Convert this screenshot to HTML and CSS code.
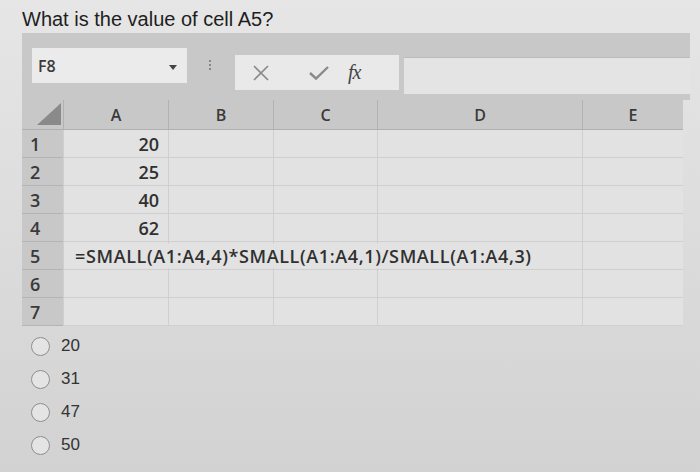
FILE: index.html
```html
<!DOCTYPE html>
<html>
<head>
<meta charset="utf-8">
<link rel="stylesheet" href="styles.css">
</head>
<body>
<div class="page">
  <div class="title">What is the value of cell A5?</div>
  <div class="excel">
    <div class="toolbar">
      <div class="namebox"><span class="name">F8</span><span class="caret"></span></div>
      <div class="dots"><i></i><i></i><i></i></div>
      <div class="actions">
        <svg class="ico-x" width="18" height="18" viewBox="0 0 18 18"><path d="M2 2L16 16M16 2L2 16" stroke="#8a8a8a" stroke-width="1.7" fill="none"/></svg>
        <svg class="ico-check" width="22" height="16" viewBox="0 0 22 16"><path d="M2 8L8 13.5L20 2" stroke="#8a8a8a" stroke-width="2.4" fill="none"/></svg>
        <span class="fx">fx</span>
      </div>
      <div class="formula"></div>
    </div>
    <div class="sheet">
      <div class="corner"><span class="tri"></span></div>
      <div class="ch">A</div><div class="ch">B</div><div class="ch">C</div><div class="ch">D</div><div class="ch">E</div>

      <div class="rh">1</div><div class="c num">20</div><div class="c"></div><div class="c"></div><div class="c"></div><div class="c"></div>
      <div class="rh">2</div><div class="c num">25</div><div class="c"></div><div class="c"></div><div class="c"></div><div class="c"></div>
      <div class="rh">3</div><div class="c num">40</div><div class="c"></div><div class="c"></div><div class="c"></div><div class="c"></div>
      <div class="rh">4</div><div class="c num">62</div><div class="c"></div><div class="c"></div><div class="c"></div><div class="c"></div>
      <div class="rh">5</div><div class="c over"><span class="ftext">=SMALL(A1:A4,4)*SMALL(A1:A4,1)/SMALL(A1:A4,3)</span></div><div class="c"></div><div class="c"></div><div class="c"></div><div class="c"></div>
      <div class="rh">6</div><div class="c"></div><div class="c"></div><div class="c"></div><div class="c"></div><div class="c"></div>
      <div class="rh">7</div><div class="c"></div><div class="c"></div><div class="c"></div><div class="c"></div><div class="c"></div>
    </div>
  </div>
  <div class="options">
    <div class="opt"><span class="radio"></span><span>20</span></div>
    <div class="opt"><span class="radio"></span><span>31</span></div>
    <div class="opt"><span class="radio"></span><span>47</span></div>
    <div class="opt"><span class="radio"></span><span>50</span></div>
  </div>
</div>
</body>
</html>
```

FILE: styles.css
```css
html, body {
  margin: 0;
  padding: 0;
}
body {
  width: 700px;
  height: 472px;
  overflow: hidden;
  background: linear-gradient(180deg, #e6e6e6 0%, #dcdcdc 50%, #d2d2d2 100%);
  font-family: "Liberation Sans", Arial, sans-serif;
}
.page {
  padding-top: 6px;
}
.title {
  padding-left: 22px;
  font-size: 20px;
  line-height: 26px;
  color: #1e1e1e;
  height: 27px;
}
.excel {
  margin-left: 22px;
  width: 668px;
}
.toolbar {
  background: #c8c8c8;
  height: 67px;
  display: flex;
  align-items: flex-start;
  position: relative;
}
.namebox {
  margin-top: 15px;
  margin-left: 10px;
  width: 155px;
  height: 35px;
  background: #ebebeb;
  display: flex;
  align-items: center;
  justify-content: space-between;
  box-sizing: border-box;
  padding: 0 10px 0 6px;
}
.name {
  font-family: "Open Sans", sans-serif;
  font-size: 16px;
  font-weight: 600;
  color: #3a3a3a;
}
.caret {
  width: 0;
  height: 0;
  border-left: 4px solid transparent;
  border-right: 4px solid transparent;
  border-top: 5px solid #444;
  margin-top: 4px;
}
.dots {
  margin-left: 22px;
  margin-top: 27px;
  display: flex;
  flex-direction: column;
  gap: 2px;
}
.dots i {
  display: block;
  width: 2px;
  height: 2px;
  background: #888;
}
.actions {
  margin-left: 24px;
  margin-top: 22px;
  width: 164px;
  height: 35px;
  background: #e9e9e9;
  display: flex;
  align-items: center;
}
.ico-x {
  margin-left: 17px;
}
.ico-check {
  margin-left: 38px;
}
.fx {
  margin-left: 18px;
  font-family: "Liberation Serif", serif;
  font-style: italic;
  font-size: 20px;
  color: #444;
  letter-spacing: -1px;
}
.formula {
  margin-left: 5px;
  margin-top: 24px;
  flex: 1;
  height: 36px;
  background: #e4e4e4;
  border-top: 1px solid #bbb;
}
.sheet {
  display: grid;
  grid-template-columns: 41px 105px 105px 104px 205px 101px;
  grid-template-rows: 30px repeat(7, 28px);
  width: 661px;
  background: #e2e2e2;
}
.corner {
  background: #c8c8c8;
  position: relative;
  border-bottom: 1px solid #b0b0b0;
}
.tri {
  position: absolute;
  right: 2px;
  bottom: 4px;
  width: 0;
  height: 0;
  border-left: 24px solid transparent;
  border-bottom: 22px solid #8a8a8a;
}
.ch {
  background: #c8c8c8;
  border-left: 1px solid #b2b2b2;
  border-bottom: 1px solid #b0b0b0;
  display: flex;
  align-items: center;
  justify-content: center;
  font-family: "Open Sans", sans-serif;
  font-size: 16px;
  font-weight: 600;
  color: #3a3a3a;
}
.rh {
  background: #c8c8c8;
  border-bottom: 1px solid #b4b4b4;
  display: flex;
  align-items: center;
  padding-left: 8px;
  font-family: "Open Sans", sans-serif;
  font-size: 18px;
  font-weight: 600;
  color: #3a3a3a;
}
.c {
  border-left: 1px solid #cfcfcf;
  border-bottom: 1px solid #cfcfcf;
  font-family: "Open Sans", sans-serif;
  font-size: 18px;
  font-weight: 600;
  color: #303030;
  display: flex;
  align-items: center;
}
.num {
  justify-content: flex-end;
  padding-right: 9px;
}
.over {
  position: relative;
  overflow: visible;
}
.ftext {
  position: absolute;
  left: 11px;
  white-space: nowrap;
  font-weight: 600;
  font-size: 18px;
  letter-spacing: 0.62px;
  background: #e2e2e2;
  z-index: 1;
}
.options {
  padding-top: 10px;
  padding-left: 31px;
  display: flex;
  flex-direction: column;
  gap: 13px;
}
.opt {
  display: flex;
  align-items: center;
  height: 20px;
  font-size: 17px;
  color: #333;
}
.radio {
  width: 17px;
  height: 17px;
  border: 1.5px solid #8e8e8e;
  border-radius: 50%;
  background: #e4e4e4;
  margin-right: 11px;
}
```
